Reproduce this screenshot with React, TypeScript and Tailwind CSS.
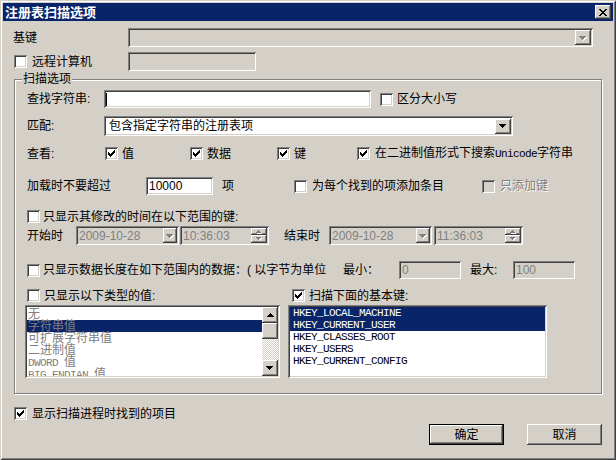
import React from "react";

const SUNKEN =
  "shadow-[inset_1px_1px_0_#808080,inset_-1px_-1px_0_#ffffff,inset_2px_2px_0_#404040,inset_-2px_-2px_0_#d4d0c8]";
const RAISED =
  "shadow-[inset_-1px_-1px_0_#404040,inset_1px_1px_0_#ffffff,inset_-2px_-2px_0_#808080,inset_2px_2px_0_#d4d0c8]";

function Box({ checked = false, disabled = false }: { checked?: boolean; disabled?: boolean }) {
  return (
    <span
      className={
        "relative block w-[13px] h-[13px] shrink-0 " + SUNKEN + (disabled ? " bg-[#d4d0c8]" : " bg-white")
      }
    >
      {checked && (
        <svg className="absolute left-0 top-0" width="13" height="13" viewBox="0 0 13 13" shapeRendering="crispEdges">
          <path
            d="M3 5h1v3H3zM4 6h1v3H4zM5 7h1v3H5zM6 6h1v3H6zM7 5h1v3H7zM8 4h1v3H8zM9 3h1v3H9z"
            fill={disabled ? "#808080" : "#000"}
          />
        </svg>
      )}
    </span>
  );
}

function ArrowDown({ disabled = false }: { disabled?: boolean }) {
  const d = "M0 0h7v1H0zM1 1h5v1H1zM2 2h3v1H2zM3 3h1v1H3z";
  return (
    <svg width="8" height="5" viewBox="0 0 8 5" shapeRendering="crispEdges">
      {disabled && <path d={d} fill="#ffffff" transform="translate(1 1)" />}
      <path d={d} fill={disabled ? "#808080" : "#000"} />
    </svg>
  );
}

function ArrowUp() {
  return (
    <svg width="7" height="4" viewBox="0 0 7 4" shapeRendering="crispEdges">
      <path d="M3 0h1v1H3zM2 1h3v1H2zM1 2h5v1H1zM0 3h7v1H0z" fill="#000" />
    </svg>
  );
}

function DropBtn({ disabled = false, w = "w-[16px]" }: { disabled?: boolean; w?: string }) {
  return (
    <span className={"h-[15px] shrink-0 bg-[#d4d0c8] flex items-center justify-center pt-[1px] " + w + " " + RAISED}>
      <ArrowDown disabled={disabled} />
    </span>
  );
}

function Spinner() {
  const up = "M2 0h1v1H2zM1 1h3v1H1zM0 2h5v1H0z";
  const down = "M0 0h5v1H0zM1 1h3v1H1zM2 2h1v1H2z";
  return (
    <span className="w-[16px] h-[15px] shrink-0 flex flex-col">
      <span className={"h-[7px] flex items-center justify-center bg-[#d4d0c8] " + RAISED}>
        <svg width="6" height="4" viewBox="0 0 6 4" shapeRendering="crispEdges">
          <path d={up} fill="#ffffff" transform="translate(1 1)" />
          <path d={up} fill="#808080" />
        </svg>
      </span>
      <span className={"h-[8px] flex items-center justify-center bg-[#d4d0c8] " + RAISED}>
        <svg width="6" height="4" viewBox="0 0 6 4" shapeRendering="crispEdges">
          <path d={down} fill="#ffffff" transform="translate(1 1)" />
          <path d={down} fill="#808080" />
        </svg>
      </span>
    </span>
  );
}

function DateField({ value }: { value: string }) {
  return (
    <div className={"w-[103px] h-[19px] bg-[#d4d0c8] flex items-center pl-[3px] pr-[2px] " + SUNKEN}>
      <span className="flex-1 text-[12px] text-[#808080] font-['Liberation_Sans',sans-serif]">{value}</span>
      <DropBtn disabled w="w-[14px]" />
    </div>
  );
}

function TimeField({ value }: { value: string }) {
  return (
    <div className={"w-[89px] h-[19px] bg-[#d4d0c8] flex items-center pl-[3px] pr-[2px] " + SUNKEN}>
      <span className="flex-1 text-[12px] text-[#808080] font-['Liberation_Sans',sans-serif]">{value}</span>
      <Spinner />
    </div>
  );
}

const MONO = "font-['Liberation_Mono','Noto_Sans_CJK_SC',monospace] text-[11px] tracking-[-0.6px]";

export default function App() {
  const types: React.ReactNode[] = [
    "无",
    "字符串值",
    "可扩展字符串值",
    "二进制值",
    <>
      <span className={MONO}>DWORD </span>值
    </>,
    <>
      <span className={MONO}>BIG_ENDIAN </span>值
    </>,
  ];
  const keys = ["HKEY_LOCAL_MACHINE", "HKEY_CURRENT_USER", "HKEY_CLASSES_ROOT", "HKEY_USERS", "HKEY_CURRENT_CONFIG"];

  return (
    <div
      className={
        "w-[616px] h-[460px] bg-[#d4d0c8] p-[3px] flex flex-col overflow-hidden text-[12px] leading-[12px] text-black font-['Liberation_Sans','Noto_Sans_CJK_SC',sans-serif] shadow-[inset_1px_1px_0_#d4d0c8,inset_-1px_-1px_0_#404040,inset_2px_2px_0_#ffffff,inset_-2px_-2px_0_#808080]"
      }
    >
      {/* Title bar */}
      <div className="h-[18px] shrink-0 bg-[#0a246a] flex items-center justify-between pl-[2px] pr-[2px]">
        <span className="text-white font-bold text-[13px] leading-[13px]">注册表扫描选项</span>
        <span className={"w-[16px] h-[14px] bg-[#d4d0c8] flex items-center justify-center " + RAISED}>
          <svg width="8" height="7" viewBox="0 0 8 7" shapeRendering="crispEdges">
            <path
              d="M0 0h2v1H0zM6 0h2v1H6zM1 1h2v1H1zM5 1h2v1H5zM2 2h4v1H2zM3 3h2v1H3zM2 4h4v1H2zM1 5h2v1H1zM5 5h2v1H5zM0 6h2v1H0zM6 6h2v1H6z"
              fill="#000"
            />
          </svg>
        </span>
      </div>

      {/* Row: 基键 */}
      <div className="mt-[7px] h-[19px] flex items-center">
        <span className="w-[125px] pl-[10px]">基键</span>
        <div className={"w-[465px] h-[19px] bg-[#d4d0c8] flex items-center justify-end pr-[2px] " + SUNKEN}>
          <DropBtn disabled />
        </div>
      </div>

      {/* Row: 远程计算机 */}
      <div className="mt-[5px] h-[19px] flex items-center">
        <div className="w-[125px] pl-[11px] flex items-center">
          <Box />
          <span className="ml-[5px]">远程计算机</span>
        </div>
        <div className={"w-[128px] h-[19px] bg-[#d4d0c8] " + SUNKEN} />
      </div>

      {/* Group box */}
      <div className="relative mt-[8px] ml-[11px] w-[588px] h-[315px] shrink-0 border border-[#808080] shadow-[inset_1px_1px_0_#ffffff,1px_1px_0_#ffffff] flex flex-col pt-[10px] pl-[12px]">
        <span className="absolute -top-[7px] left-[7px] px-[1px] bg-[#d4d0c8]">扫描选项</span>

        {/* 查找字符串 */}
        <div className="h-[18px] flex items-center">
          <span className="w-[77px]">查找字符串:</span>
          <div className={"w-[267px] h-[18px] bg-white flex items-center pl-[2px] " + SUNKEN}>
            <span className="w-[1px] h-[13px] bg-black" />
          </div>
          <div className="ml-[9px] flex items-center">
            <Box />
            <span className="ml-[4px]">区分大小写</span>
          </div>
        </div>

        {/* 匹配 */}
        <div className="mt-[8px] h-[20px] flex items-center">
          <span className="w-[77px]">匹配:</span>
          <div className={"w-[409px] h-[20px] bg-white flex items-center pl-[5px] pr-[2px] " + SUNKEN}>
            <span className="flex-1">包含指定字符串的注册表项</span>
            <DropBtn w="w-[16px]" />
          </div>
        </div>

        {/* 查看 */}
        <div className="mt-[11px] h-[13px] flex items-center">
          <span className="w-[78px]">查看:</span>
          <div className="w-[85px] flex items-center">
            <Box checked />
            <span className="ml-[4px]">值</span>
          </div>
          <div className="w-[87px] flex items-center">
            <Box checked />
            <span className="ml-[4px]">数据</span>
          </div>
          <div className="w-[80px] flex items-center">
            <Box checked />
            <span className="ml-[4px]">键</span>
          </div>
          <div className="flex items-center">
            <Box checked />
            <span className="ml-[5px]">
              在二进制值形式下搜索<span className={MONO}>Unicode</span>字符串
            </span>
          </div>
        </div>

        {/* 加载时不要超过 */}
        <div className="mt-[17px] h-[18px] flex items-center">
          <span className="w-[119px]">加载时不要超过</span>
          <div className={"w-[67px] h-[18px] bg-white flex items-center pl-[3px] " + SUNKEN}>
            <span className="text-[12px] font-['Liberation_Sans',sans-serif]">10000</span>
          </div>
          <span className="w-[81px] pl-[9px]">项</span>
          <div className="w-[188px] flex items-center">
            <Box />
            <span className="ml-[5px]">为每个找到的项添加条目</span>
          </div>
          <div className="flex items-center">
            <Box disabled />
            <span className="ml-[5px] text-[#808080] [text-shadow:1px_1px_0_#ffffff]">只添加键</span>
          </div>
        </div>

        {/* 修改时间 */}
        <div className="mt-[15px] h-[13px] flex items-center">
          <Box />
          <span className="ml-[3px]">只显示其修改的时间在以下范围的键:</span>
        </div>

        <div className="mt-[3px] h-[19px] flex items-center">
          <span className="w-[49px]">开始时</span>
          <DateField value="2009-10-28" />
          <span className="w-[1px]" />
          <TimeField value="10:36:03" />
          <span className="ml-[15px] w-[45px]">结束时</span>
          <DateField value="2009-10-28" />
          <span className="w-[2px]" />
          <TimeField value="11:36:03" />
        </div>

        {/* 数据长度 */}
        <div className="mt-[16px] h-[18px] flex items-center">
          <div className="w-[316px] flex items-center">
            <Box />
            <span className="ml-[3px]">只显示数据长度在如下范围内的数据：( 以字节为单位</span>
          </div>
          <span className="w-[56px]">最小：</span>
          <div className={"w-[62px] h-[18px] bg-[#d4d0c8] flex items-center pl-[3px] " + SUNKEN}>
            <span className="text-[12px] text-[#808080] font-['Liberation_Sans',sans-serif]">0</span>
          </div>
          <span className="ml-[9px] w-[43px]">最大:</span>
          <div className={"w-[62px] h-[18px] bg-[#d4d0c8] flex items-center pl-[3px] " + SUNKEN}>
            <span className="text-[12px] text-[#808080] font-['Liberation_Sans',sans-serif]">100</span>
          </div>
        </div>

        {/* type / base keys */}
        <div className="mt-[10px] h-[13px] flex items-center">
          <div className="w-[265px] flex items-center">
            <Box />
            <span className="ml-[4px]">只显示以下类型的值:</span>
          </div>
          <Box checked />
          <span className="ml-[4px]">扫描下面的基本键:</span>
        </div>

        <div className="mt-[3px] h-[73px] flex -ml-[2px]">
          <div className={"w-[255px] h-[73px] bg-white flex p-[2px] " + SUNKEN}>
            <div className="flex-1 overflow-hidden pt-[1px]">
              {types.map((t, i) => (
                <div
                  key={i}
                  className={
                    "h-[12px] leading-[12px] pl-[1px] whitespace-nowrap text-[#808080] " +
                    (i === 1 ? "bg-[#0a246a]" : "")
                  }
                >
                  {t}
                </div>
              ))}
            </div>
            <div className="w-[16px] flex flex-col">
              <span className={"h-[16px] bg-[#d4d0c8] flex items-center justify-center " + RAISED}>
                <ArrowUp />
              </span>
              <span className={"h-[16px] bg-[#d4d0c8] " + RAISED} />
              <span className="flex-1 bg-[repeating-conic-gradient(#ffffff_0%_25%,#d4d0c8_0%_50%)] bg-[length:2px_2px]" />
              <span className={"h-[16px] bg-[#d4d0c8] flex items-center justify-center pt-[1px] " + RAISED}>
                <ArrowDown />
              </span>
            </div>
          </div>
          <div className={"ml-[8px] w-[259px] h-[73px] bg-white p-[2px] overflow-hidden " + SUNKEN}>
            {keys.map((k, i) => (
              <div
                key={k}
                className={
                  "h-[12px] leading-[12px] pl-[3px] " +
                  MONO +
                  (i < 2 ? " bg-[#0a246a] text-white" : " text-black")
                }
              >
                {k}
              </div>
            ))}
          </div>
        </div>
      </div>

      {/* bottom checkbox */}
      <div className="mt-[13px] h-[13px] ml-[11px] flex items-center">
        <Box checked />
        <span className="ml-[5px]">显示扫描进程时找到的项目</span>
      </div>

      {/* buttons */}
      <div className="mt-[4px] flex justify-end pr-[11px]">
        <div className="w-[75px] h-[21px] border border-black">
          <div className={"w-full h-full bg-[#d4d0c8] flex items-center justify-center " + RAISED}>确定</div>
        </div>
        <div className={"ml-[23px] w-[75px] h-[21px] bg-[#d4d0c8] flex items-center justify-center " + RAISED}>
          取消
        </div>
      </div>
    </div>
  );
}
